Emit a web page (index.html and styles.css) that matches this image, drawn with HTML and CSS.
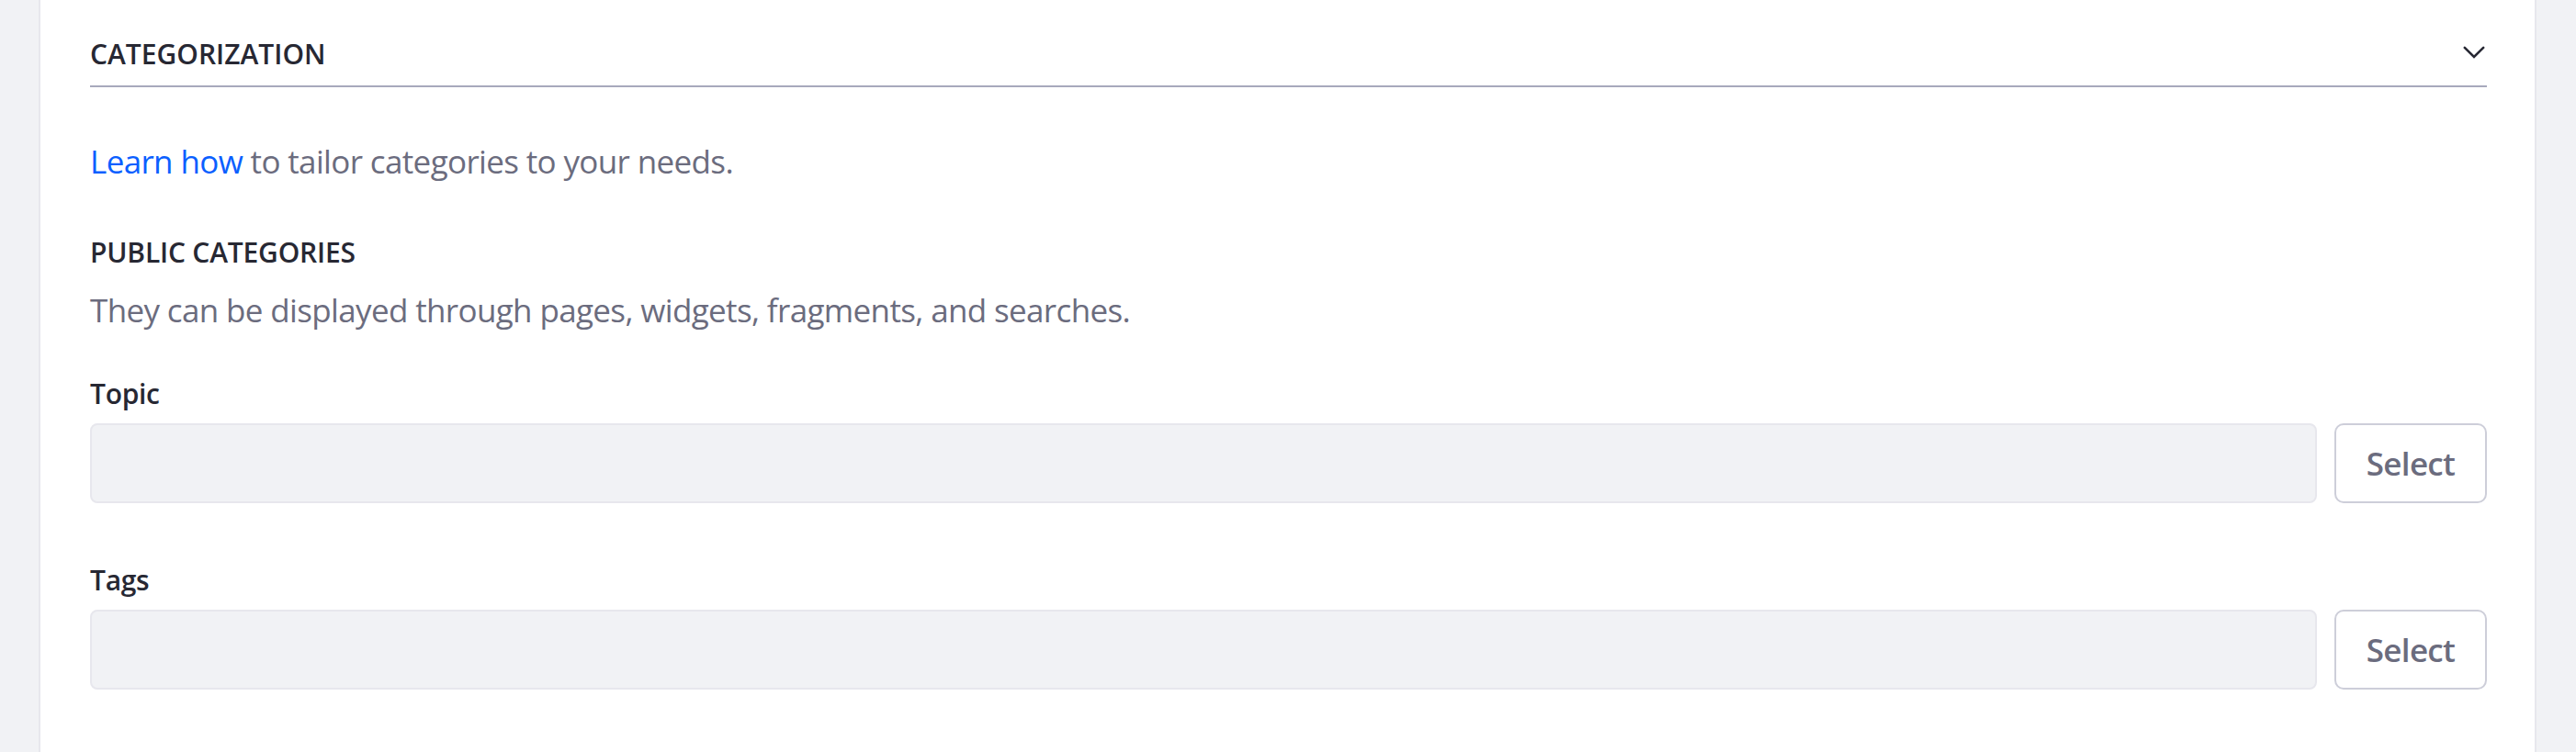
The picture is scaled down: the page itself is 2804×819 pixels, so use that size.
FILE: index.html
```html
<!DOCTYPE html>
<html lang="en">
<head>
<meta charset="utf-8">
<title>Categorization</title>
<link rel="stylesheet" href="styles.css">
</head>
<body>
<div class="sheet">
  <div class="sheet-header">
    <span class="sheet-subtitle">Categorization</span>
    <svg class="chevron" width="28" height="28" viewBox="0 0 28 28" aria-hidden="true">
      <polyline points="3.8,8.8 14,19 24.2,8.8" fill="none" stroke="#272833" stroke-width="2.6" stroke-linecap="round" stroke-linejoin="miter"/>
    </svg>
  </div>
  <p class="intro"><a class="link" href="#">Learn how</a> to tailor categories to your needs.</p>
  <h3 class="group-title">Public Categories</h3>
  <p class="help">They can be displayed through pages, widgets, fragments, and searches.</p>
  <div class="form-group first">
    <label class="field-label">Topic</label>
    <div class="input-row">
      <div class="fake-input"></div>
      <button class="btn-select" type="button">Select</button>
    </div>
  </div>
  <div class="form-group">
    <label class="field-label">Tags</label>
    <div class="input-row">
      <div class="fake-input"></div>
      <button class="btn-select" type="button">Select</button>
    </div>
  </div>
</div>
</body>
</html>
```
FILE: styles.css
```css
* { box-sizing: border-box; }
html, body { margin: 0; padding: 0; }
body {
  background: #f1f2f5;
  font-family: "Open Sans", "Noto Sans", sans-serif;
  color: #272833;
}
.sheet {
  margin: 0 43px 0 42px;
  min-height: 100vh;
  background: #ffffff;
  border-left: 2px solid #e7e7ed;
  border-right: 2px solid #e7e7ed;
  padding: 39px 52px 0 54px;
}
.sheet-header {
  display: flex;
  align-items: center;
  justify-content: space-between;
  padding-bottom: 14px;
  border-bottom: 2px solid #a7a9bc;
}
.sheet-subtitle {
  font-size: 30px;
  line-height: 40px;
  font-weight: 600;
  text-transform: uppercase;
  color: #272833;
}
.chevron {
  display: block;
  margin-bottom: 5px;
}
.intro, .help {
  margin: 0;
  font-size: 35px;
  line-height: 52px;
  letter-spacing: -0.64px;
  color: #6b6c7e;
}
.intro { margin-top: 55px; }
.link { color: #0b5fff; text-decoration: none; }
.group-title {
  margin: 53px 0 0;
  font-size: 30px;
  line-height: 40px;
  font-weight: 600;
  letter-spacing: -0.2px;
  text-transform: uppercase;
  color: #272833;
}
.help { margin-top: 17px; }
.form-group { margin-top: 64px; }
.form-group.first { margin-top: 45px; }
.field-label {
  display: block;
  font-size: 30px;
  line-height: 40px;
  font-weight: 600;
  letter-spacing: -0.3px;
  color: #272833;
}
.input-row {
  display: flex;
  gap: 19px;
  margin-top: 12px;
}
.fake-input {
  flex: 1;
  height: 87px;
  background: #f1f2f5;
  border: 2px solid #e7e7ed;
  border-radius: 8px;
}
.btn-select {
  width: 166px;
  height: 87px;
  background: #ffffff;
  border: 2px solid #cdced9;
  border-radius: 10px;
  font-family: "Open Sans", "Noto Sans", sans-serif;
  font-size: 35px;
  font-weight: 600;
  letter-spacing: -0.7px;
  color: #6b6c7e;
  padding: 0;
}
```
